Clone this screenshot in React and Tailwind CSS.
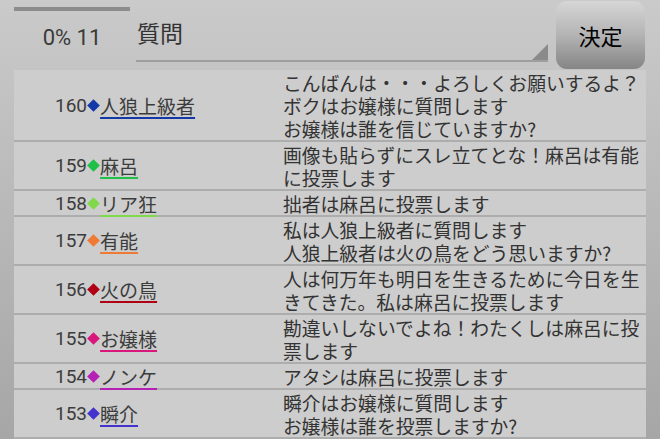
const rows = [
  { no: 160, name: '人狼上級者', color: '#1538a8', lines: ['こんばんは・・・よろしくお願いするよ？', 'ボクはお嬢様に質問します', 'お嬢様は誰を信じていますか?'] },
  { no: 159, name: '麻呂', color: '#1fbf48', lines: ['画像も貼らずにスレ立てとな！麻呂は有能', 'に投票します'] },
  { no: 158, name: 'リア狂', color: '#7fd94a', lines: ['拙者は麻呂に投票します'] },
  { no: 157, name: '有能', color: '#ee7a35', lines: ['私は人狼上級者に質問します', '人狼上級者は火の鳥をどう思いますか?'] },
  { no: 156, name: '火の鳥', color: '#b00014', lines: ['人は何万年も明日を生きるために今日を生', 'きてきた。私は麻呂に投票します'] },
  { no: 155, name: 'お嬢様', color: '#d8167c', lines: ['勘違いしないでよね！わたくしは麻呂に投', '票します'] },
  { no: 154, name: 'ノンケ', color: '#b520b5', lines: ['アタシは麻呂に投票します'] },
  { no: 153, name: '瞬介', color: '#4433cc', lines: ['瞬介はお嬢様に質問します', 'お嬢様は誰を投票しますか?'] },
];

const jp = { fontFamily: '"Noto Sans CJK JP", sans-serif' };

const Row = ({ row }) => (
  <div className="flex border-b-2 border-[#adadad] bg-[#cdcdcd]">
    <div className="w-[269px] shrink-0 flex items-center pl-[41px] text-[19px] leading-[23px] text-[#3c3c3c]">
      <span>{row.no}</span>
      <span
        className="w-[9px] h-[9px] rotate-45 mx-[2px] shrink-0"
        style={{ backgroundColor: row.color }}
      />
      <span
        className="relative z-10 underline decoration-2 underline-offset-[3px]"
        style={{ ...jp, textDecorationColor: row.color }}
      >
        {row.name}
      </span>
    </div>
    <div className="flex-1 pt-[1px] text-[18.8px] leading-[23px] text-[#333]" style={jp}>
      {row.lines.map((l, i) => (
        <div key={i} className="whitespace-nowrap h-[23px]">{l}</div>
      ))}
    </div>
  </div>
);

export default function App() {
  return (
    <div
      className="w-[660px] h-[439px] overflow-hidden bg-gradient-to-b from-[#cacaca] to-[#a6a6a6] flex flex-col"
      style={{ fontFamily: 'Roboto, "Noto Sans CJK JP", sans-serif' }}
    >
      {/* top bar */}
      <div className="h-[70px] shrink-0 flex pl-[14px] pr-[15px]">
        <div className="w-[116px] flex flex-col">
          <div className="mt-[7px] h-[4px] bg-[#8c8c8c]" />
          <div className="mt-[12px] text-center text-[22px] leading-[30px] text-[#3a3a3a]">0% 11</div>
        </div>
        <div className="ml-[6px] w-[412px] relative border-b-2 border-[#9e9e9e] mb-[8px]">
          <div className="pt-[16px] pl-[1px] text-[23px] leading-[32px] text-[#333]" style={jp}>質問</div>
          <div className="absolute right-0 bottom-0 w-0 h-0 border-l-[16px] border-l-transparent border-b-[16px] border-b-[#8a8a8a]" />
        </div>
        <button
          className="ml-[8px] mt-[1px] w-[89px] h-[68px] rounded-[11px] bg-gradient-to-b from-[#d6d6d6] via-[#b4b4b4] to-[#858585] text-[22px] text-black flex items-center justify-center"
          style={jp}
        >
          決定
        </button>
      </div>
      {/* list */}
      <div className="mx-[14px] flex flex-col">
        {rows.map(r => (
          <Row key={r.no} row={r} />
        ))}
      </div>
    </div>
  );
}
